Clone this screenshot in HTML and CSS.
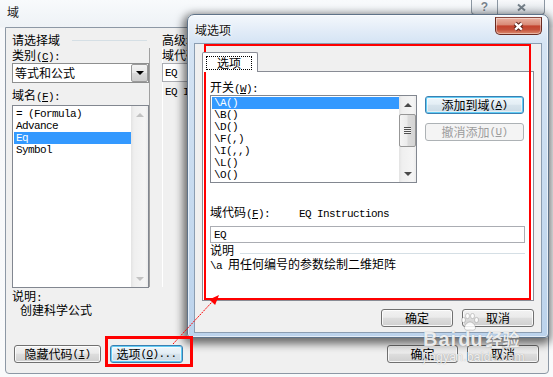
FILE: index.html
```html
<!DOCTYPE html>
<html>
<head>
<meta charset="utf-8">
<title>域</title>
<link rel="stylesheet" href="styles.css">
</head>
<body>
<div class="outer">
  <div class="otitle">
    <span class="ttext">域</span>
    <div class="caps">
      <div class="cap help">?</div>
      <div class="cap close"><svg width="11" height="9" viewBox="0 0 11 9"><path d="M2 1.5L9 7.5M9 1.5L2 7.5"/></svg></div>
    </div>
  </div>
  <div class="oclient">
    <div class="omain">
      <div class="legend"><span>请选择域</span><i class="rule"></i></div>
      <div class="gcell"></div>
      <div class="legend"><span>高级域属性</span><i class="rule"></i></div>
      <div class="lcol">
        <div class="lbl">类别<span class="m">(<u>C</u>):</span></div>
        <div class="select"><span>等式和公式</span><span class="ddbtn"><i class="td blk"></i></span></div>
        <div class="lbl lbl2">域名<span class="m">(<u>F</u>):</span></div>
        <div class="list olist">
          <div class="items">
            <div class="it m">= (Formula)</div>
            <div class="it m">Advance</div>
            <div class="it m sel">Eq</div>
            <div class="it m">Symbol</div>
          </div>
          <div class="sb">
            <div class="sbb"><i class="tu"></i></div>
            <div class="sbb end"><i class="td"></i></div>
          </div>
        </div>
        <div class="desc">
          <div>说明<span class="m">:</span></div>
          <div class="ind">创建科学公式</div>
        </div>
      </div>
      <div class="vsep"></div>
      <div class="rcol">
        <div class="lbl">域代码<span class="m">:</span></div>
        <div class="tbox otbox"><span class="m">EQ</span></div>
        <div class="rtext m">EQ Instructions</div>
      </div>
    </div>
    <div class="obtns">
      <div class="grp">
        <div class="btn w87">隐藏代码<span class="m">(<u>I</u>)</span></div>
        <div class="btn def w73">选项<span class="m">(<u>O</u>)...</span></div>
      </div>
      <div class="grp">
        <div class="btn w71">确定</div>
        <div class="btn w72">取消</div>
      </div>
    </div>
  </div>
</div>

<div class="dlg">
  <div class="dtitle">
    <span class="dtext">域选项</span>
    <div class="xbtn"><svg width="13" height="11" viewBox="0 0 13 11"><path class="xo" d="M3.2 2.4L9.8 8.6M9.8 2.4L3.2 8.6"/><path class="xi" d="M3.2 2.4L9.8 8.6M9.8 2.4L3.2 8.6"/></svg></div>
  </div>
  <div class="dclient">
    <div class="tabs"><div class="tab"><div class="focus">选项</div></div></div>
    <div class="page">
      <div class="lbl">开关<span class="m">(<u>W</u>):</span></div>
      <div class="swrow">
        <div class="list flist">
          <div class="items">
            <div class="it m sel">\A()</div>
            <div class="it m">\B()</div>
            <div class="it m">\D()</div>
            <div class="it m">\F(,)</div>
            <div class="it m">\I(,,)</div>
            <div class="it m">\L()</div>
            <div class="it m">\O()</div>
          </div>
          <div class="sb">
            <div class="sbb"><i class="tu k"></i></div>
            <div class="thumb"><i class="grip"></i></div>
            <div class="sbb end"><i class="td k"></i></div>
          </div>
        </div>
        <div class="swbtns">
          <div class="btn def w99">添加到域<span class="m">(<u>A</u>)</span></div>
          <div class="btn dis w99">撤消添加<span class="m">(<u>U</u>)</span></div>
        </div>
      </div>
      <div class="lbl codelbl">域代码<span class="m">(<u>F</u>):</span><span class="m codename">EQ Instructions</span></div>
      <div class="tbox wide"><span class="m">EQ</span></div>
      <div class="legend dl"><span>说明</span><i class="rule"></i></div>
      <div class="dtxt"><span class="m">\a </span>用任何编号的参数绘制二维矩阵</div>
    </div>
    <div class="dbtns">
      <div class="btn w72">确定</div>
      <div class="btn w72">取消</div>
    </div>
  </div>
</div>

<div class="mark mark1"></div>
<div class="mark mark2"></div>

<svg class="arrow" width="553" height="377" viewBox="0 0 553 377">
  <line x1="173" y1="344" x2="212" y2="302" stroke="#ff0000" stroke-width="1" stroke-dasharray="2 1"/>
  <polygon points="219,295 215.1,305 209.3,299.6" fill="#ff0000"/>
</svg>

<div class="wm">
  <div class="wlogo">
    <span class="wb">Bai</span>
    <span class="wdu">
      <svg width="20" height="18" viewBox="0 0 20 18">
        <ellipse cx="3.5" cy="7" rx="2" ry="2.6"/>
        <ellipse cx="7.5" cy="3" rx="2" ry="2.6"/>
        <ellipse cx="12.5" cy="3" rx="2" ry="2.6"/>
        <ellipse cx="16.5" cy="7" rx="2" ry="2.6"/>
        <path d="M10 9C7 9 4.5 12.5 4.5 15C4.5 17 6.5 17.5 10 17C13.5 17.5 15.5 17 15.5 15C15.5 12.5 13 9 10 9Z"/>
      </svg>
      <span>du</span>
    </span>
    <span class="wjy">经验</span>
  </div>
  <div class="wurl">jingyan.baidu.com</div>
</div>
</body>
</html>
```

FILE: styles.css
```css
* { box-sizing: border-box; margin: 0; padding: 0; }
html, body { width: 553px; height: 377px; overflow: hidden; }
body {
  position: relative;
  background: #fbfcfd;
  font-family: "Noto Sans CJK SC", "Noto Sans", sans-serif;
  font-size: 12px;
  line-height: 14px;
  color: #000;
}
i { display: block; font-style: normal; }
.m { font-family: "Liberation Mono", "DejaVu Sans Mono", monospace; font-size: 11px; letter-spacing: -0.6px; }
u { text-decoration: underline; }

/* ---------- outer window ---------- */
.outer {
  width: 553px; height: 377px;
  display: flex; flex-direction: column;
  background: linear-gradient(#f8fafc, #eef2f6 27px, #f7f8fa 28px, #f9fafb);
}
.otitle {
  height: 27px; flex: none;
  display: flex; justify-content: space-between; align-items: flex-start;
  padding: 0 8px 0 7px;
}
.ttext { margin-top: 5px; color: #222; }
.caps {
  display: flex; height: 15px;
  border: 1px solid #8b96a2; border-top: 0;
  border-radius: 0 0 4px 4px; overflow: hidden;
  background: linear-gradient(#f8f9fb, #e8ecf0 55%, #dde3e9);
}
.cap { display: flex; align-items: center; justify-content: center; height: 100%; }
.cap.help {
  width: 26px; border-right: 1px solid #8b96a2;
  font: bold 12px/14px "Liberation Sans", sans-serif;
  color: #78828c; text-shadow: 0 0 2px #fff;
}
.cap.close { width: 46px; }
.cap.close path { stroke: #75808a; stroke-width: 2; fill: none; }

.oclient {
  flex: 1;
  margin: 0 4px 3px 5px;
  border: 1px solid #8d98a5; border-radius: 0 0 4px 4px;
  background: #f0f0f0;
  display: flex; flex-direction: column;
  padding: 5px 9px 10px 6px;
}
.omain { display: grid; grid-template-columns: 137px 13px 1fr; grid-template-rows: 15px auto; }
.legend { display: flex; align-items: flex-start; height: 15px; white-space: nowrap; }
.legend .rule { flex: 1; margin: 7px 2px 0 12px; border-top: 1px solid #d5dfe5; }

.lcol { display: flex; flex-direction: column; }
.lbl { height: 14px; white-space: nowrap; }
.select {
  margin-top: 1px; height: 20px;
  border: 1px solid #8e8f8f; background: #fff;
  display: flex; align-items: center; justify-content: space-between;
  padding-left: 2px;
}
.ddbtn {
  width: 17px; height: 18px;
  border: 1px solid #9a9a9a; border-radius: 2px;
  background: linear-gradient(#f4f4f4, #e8e8e8 48%, #d9d9d9 52%, #cdcdcd);
  display: flex; align-items: center; justify-content: center;
}
.lbl2 { margin-top: 5px; }

.list { display: flex; border: 1px solid #828790; background: #fff; }
.olist { margin-top: 3px; height: 183px; }
.items { flex: 1; padding-left: 1px; }
.olist .items { padding-top: 2px; }
.flist .items { padding-top: 1px; }
.it { height: 12px; line-height: 12px; padding-left: 2px; white-space: pre; }
.it.sel { background: #3399ff; color: #fff; }

.sb {
  width: 17px; flex: none;
  display: flex; flex-direction: column;
  background: linear-gradient(90deg, #e3e3e3, #efefef 18%, #f5f5f5 82%, #ececec);
}
.sbb { height: 17px; flex: none; display: flex; align-items: center; justify-content: center; }
.sbb.end { margin-top: auto; }
.thumb {
  margin-top: 1px; height: 33px;
  border: 1px solid #979797; border-radius: 2px;
  background: linear-gradient(90deg, #f5f5f5, #ebebeb 48%, #dcdcdc 52%, #d4d4d4);
  display: flex; align-items: center; justify-content: center;
}
.grip { width: 7px; height: 7px; background: repeating-linear-gradient(#505050 0 1px, #f4f4f4 1px 2px); }

.tu, .td { width: 0; height: 0; border-left: 4px solid transparent; border-right: 4px solid transparent; }
.tu { border-bottom: 4px solid #c2c2c2; }
.td { border-top: 4px solid #c2c2c2; }
.tu.k { border-bottom-color: #4a4a4a; }
.td.k { border-top-color: #4a4a4a; }
.td.blk { border-top-color: #000; border-left-width: 4px; border-right-width: 4px; }

.desc { margin-top: 2px; line-height: 12px; }
.desc .ind { padding-left: 8px; }

.vsep {
  grid-column: 2; grid-row: 2;
  height: 239px;
  border-left: 1px solid #a0a0a0;
  box-shadow: 1px 0 0 #fff;
}
.rcol { grid-column: 3; grid-row: 2; }
.tbox {
  border: 1px solid #abadb3; background: #fff;
  display: flex; align-items: center;
}
.otbox { margin-top: 1px; height: 19px; width: 160px; padding-left: 2px; }
.rtext { margin-top: 4px; padding-left: 3px; line-height: 12px; }

.obtns { margin-top: auto; display: flex; justify-content: space-between; padding-left: 2px; }
.grp { display: flex; gap: 9px; }

/* ---------- buttons ---------- */
.btn {
  height: 18px;
  display: flex; align-items: center; justify-content: center;
  border: 1px solid #707070; border-radius: 3px;
  background: linear-gradient(#f2f2f2, #ebebeb 45%, #dddddd 52%, #cfcfcf);
  box-shadow: inset 0 0 0 1px rgba(255, 255, 255, 0.8);
  white-space: nowrap;
}
.btn.def {
  border-color: #3c7fb1;
  background: linear-gradient(#eef6fb, #e4eef5 45%, #d6e3ec 52%, #cbdae5);
  box-shadow: inset 0 0 0 1px #62cdf5, inset 0 0 0 2px rgba(255, 255, 255, 0.5);
}
.btn.dis { border-color: #adb2b5; background: #f4f4f4; color: #9c9c9c; box-shadow: none; }
.w71 { width: 71px; }
.w72 { width: 72px; }
.w73 { width: 73px; }
.w87 { width: 87px; }
.w99 { width: 99px; }

/* ---------- front dialog ---------- */
.dlg {
  position: absolute; left: 187px; top: 14px;
  width: 362px; height: 324px;
  border: 1px solid #5f7389; border-radius: 7px 7px 4px 4px;
  background: linear-gradient(#f4f8fc, #e4edf8 14px, #d5e4f4 28px, #c6daef 60%, #bcd3ec);
  box-shadow: -1px 3px 9px 3px rgba(0, 0, 0, 0.55), inset 0 0 0 1px rgba(255, 255, 255, 0.6);
  display: flex; flex-direction: column;
  padding: 0 6px 4px 6px;
}
.dtitle { height: 28px; flex: none; display: flex; justify-content: space-between; align-items: flex-start; }
.dtext { margin: 8px 0 0 1px; color: #111; text-shadow: 0 0 5px #fff, 0 0 3px #fff; }
.xbtn {
  margin-top: 2px; width: 47px; height: 18px;
  border: 1px solid #6a2a20; border-top-color: #8a4a40;
  border-radius: 0 0 5px 5px;
  background: linear-gradient(#eab2a2, #d98b77 42%, #c4432e 50%, #c4503a 72%, #dc8c70);
  box-shadow: inset 0 0 0 1px rgba(255, 255, 255, 0.4);
  display: flex; align-items: center; justify-content: center;
}
.xbtn .xo { stroke: #5a2018; stroke-width: 4.4; fill: none; }
.xbtn .xi { stroke: #fff; stroke-width: 2.4; fill: none; }

.dclient {
  flex: 1;
  border: 1px solid #8b9db1; background: #f0f0f0;
  display: flex; flex-direction: column;
  padding: 8px 7px 0 7px;
}
.tabs { display: flex; height: 20px; position: relative; z-index: 1; flex: none; }
.tab {
  width: 56px; height: 20px;
  border: 1px solid #898c95; border-bottom: 0; border-radius: 2px 2px 0 0;
  background: #fff;
  padding: 3px 5px 0 3px;
}
.focus { height: 14px; border: 1px dotted #000; line-height: 12px; text-align: center; }
.page {
  margin-top: -1px; height: 230px; flex: none;
  border: 1px solid #898c95; background: #fff;
  padding: 8px 8px 0 7px;
  display: flex; flex-direction: column;
}
.swrow { display: flex; gap: 8px; margin-top: 1px; }
.flist { width: 207px; height: 88px; }
.swbtns { display: flex; flex-direction: column; gap: 9px; padding-top: 1px; }
.codelbl { margin-top: 22px; }
.codename { margin-left: 29px; }
.tbox.wide { margin-top: 7px; height: 17px; width: 315px; padding-left: 3px; }
.dl { height: 14px; }
.dl .rule { margin: 10px 0 0 6px; }
.dtxt { white-space: nowrap; }
.dbtns { margin-top: 8px; display: flex; justify-content: flex-end; gap: 9px; }

/* ---------- annotations ---------- */
.mark { position: absolute; border: 2px solid #ff0000; }
.mark1 { left: 204px; top: 44px; width: 327px; height: 256px; }
.mark2 { left: 105px; top: 336px; width: 88px; height: 31px; border-width: 3px; }
.arrow { position: absolute; left: 0; top: 0; }

.wm {
  position: absolute; left: 423px; top: 313px;
  color: rgba(255, 255, 255, 0.85);
  text-shadow: 0 0 1px rgba(80, 80, 80, 0.5);
}
.wlogo { display: flex; align-items: flex-end; height: 34px; }
.wb { font: bold 20px/16px "Liberation Sans", sans-serif; letter-spacing: 1px; }
.wdu { display: flex; flex-direction: column; align-items: center; margin-left: 1px; }
.wdu svg { fill: rgba(255, 255, 255, 0.85); stroke: rgba(90, 90, 90, 0.35); stroke-width: 0.8; }
.wdu span { font: bold 20px/16px "Liberation Sans", sans-serif; }
.wjy { margin-left: 3px; font-size: 17px; line-height: 16px; font-weight: bold; }
.wurl { margin-top: 3px; font: 12px/14px "Liberation Sans", sans-serif; letter-spacing: 0.3px; }
```
